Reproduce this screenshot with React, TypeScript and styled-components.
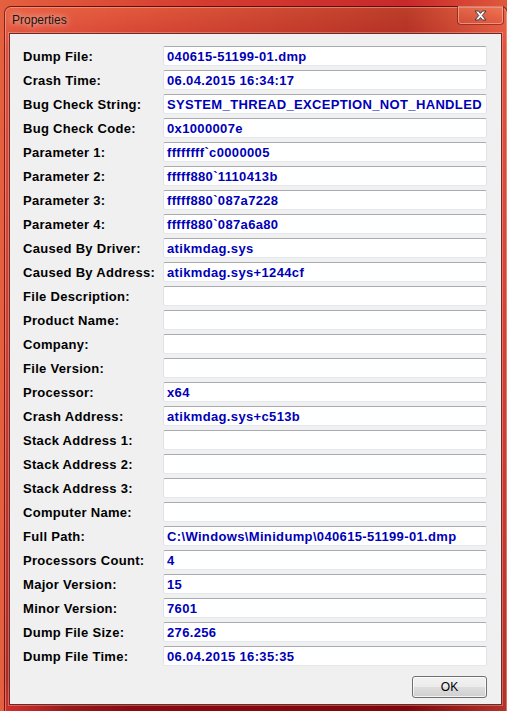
import React from "react";
import styled, { createGlobalStyle } from "styled-components";

const GlobalStyle = createGlobalStyle`
  html, body {
    margin: 0;
    padding: 0;
    overflow: hidden;
  }
  body {
    background: #c92a24;
  }
`;

interface Field {
  label: string;
  value?: string;
}

const fields: Field[] = [
  { label: "Dump File:", value: "040615-51199-01.dmp" },
  { label: "Crash Time:", value: "06.04.2015 16:34:17" },
  { label: "Bug Check String:", value: "SYSTEM_THREAD_EXCEPTION_NOT_HANDLED" },
  { label: "Bug Check Code:", value: "0x1000007e" },
  { label: "Parameter 1:", value: "ffffffff`c0000005" },
  { label: "Parameter 2:", value: "fffff880`1110413b" },
  { label: "Parameter 3:", value: "fffff880`087a7228" },
  { label: "Parameter 4:", value: "fffff880`087a6a80" },
  { label: "Caused By Driver:", value: "atikmdag.sys" },
  { label: "Caused By Address:", value: "atikmdag.sys+1244cf" },
  { label: "File Description:" },
  { label: "Product Name:" },
  { label: "Company:" },
  { label: "File Version:" },
  { label: "Processor:", value: "x64" },
  { label: "Crash Address:", value: "atikmdag.sys+c513b" },
  { label: "Stack Address 1:" },
  { label: "Stack Address 2:" },
  { label: "Stack Address 3:" },
  { label: "Computer Name:" },
  { label: "Full Path:", value: "C:\\Windows\\Minidump\\040615-51199-01.dmp" },
  { label: "Processors Count:", value: "4" },
  { label: "Major Version:", value: "15" },
  { label: "Minor Version:", value: "7601" },
  { label: "Dump File Size:", value: "276.256" },
  { label: "Dump File Time:", value: "06.04.2015 16:35:35" },
];

export default function App() {
  return (
    <>
      <GlobalStyle />
      <Desktop>
        <Window>
          <TitleBar>
            <Caption>Properties</Caption>
            <CloseButton type="button" aria-label="Close">
              <svg width="13" height="11" viewBox="0 0 13 11">
                <path
                  d="M1 1 H4.5 L6.5 3.4 L8.5 1 H12 L8.3 5.5 L12 10 H8.5 L6.5 7.6 L4.5 10 H1 L4.7 5.5 Z"
                  fill="#f6f6f6"
                  stroke="#3c3c44"
                  strokeWidth="1"
                  strokeLinejoin="round"
                />
              </svg>
            </CloseButton>
          </TitleBar>
          <Client>
            <FieldGrid>
              {fields.map((f) => (
                <React.Fragment key={f.label}>
                  <Label>{f.label}</Label>
                  <ValueBox readOnly value={f.value ?? ""} />
                </React.Fragment>
              ))}
            </FieldGrid>
            <Actions>
              <OkButton type="button">OK</OkButton>
            </Actions>
          </Client>
        </Window>
      </Desktop>
    </>
  );
}

const Desktop = styled.div`
  width: 507px;
  height: 711px;
  overflow: hidden;
  background: linear-gradient(90deg, #e4603f 0%, #d43c30 40%, #c8282a 80%, #e0583c 100%);
`;

const Window = styled.div`
  margin: 6px 0 0 4px;
  width: 504px;
  height: 712px;
  box-sizing: border-box;
  display: flex;
  flex-direction: column;
  border: 1px solid rgba(90, 10, 10, 0.7);
  border-radius: 7px 7px 0 0;
  box-shadow: inset 0 0 0 1px rgba(255, 210, 190, 0.4);
  background:
    radial-gradient(ellipse 60px 40px at 0% 100%, rgba(255, 50, 50, 0.55), transparent),
    linear-gradient(90deg, rgba(255, 140, 100, 0.25) 0%, transparent 25%, rgba(100, 0, 0, 0.3) 80%, rgba(255, 130, 90, 0.35) 100%),
    linear-gradient(180deg, #e2593c 0%, #d23b31 6%, #c02222 45%, #a20f18 80%, #880910 100%);
`;

const TitleBar = styled.div`
  height: 26px;
  display: flex;
  align-items: flex-start;
  justify-content: space-between;
  padding: 0 3px 0 7px;
`;

const Caption = styled.span`
  margin-top: 6px;
  font-family: "Liberation Sans", Arial, sans-serif;
  font-size: 12px;
  color: #161616;
  text-shadow: 0 0 6px rgba(255, 225, 215, 0.8), 0 0 10px rgba(255, 225, 215, 0.55);
`;

const CloseButton = styled.button`
  width: 47px;
  height: 19px;
  margin-top: -1px;
  padding: 0;
  display: flex;
  align-items: center;
  justify-content: center;
  border: 1px solid rgba(100, 20, 15, 0.6);
  border-top: none;
  border-radius: 0 0 4px 4px;
  box-shadow: inset 0 0 0 1px rgba(255, 205, 185, 0.5);
  background: linear-gradient(180deg, rgba(255, 150, 120, 0.3), rgba(220, 80, 55, 0.25));
`;

const Client = styled.div`
  margin: 0 5px 0 4px;
  height: 672px;
  box-sizing: border-box;
  display: flex;
  flex-direction: column;
  padding: 12px 14px 6px 13px;
  background: #f0f0f0;
  border: 1px solid #6d2a24;
  box-shadow: 0 0 0 1px rgba(255, 200, 190, 0.35);
`;

const FieldGrid = styled.div`
  display: grid;
  grid-template-columns: 140px 1fr;
  grid-auto-rows: 20px;
  row-gap: 4px;
  align-items: center;
`;

const Label = styled.span`
  font-family: "Liberation Sans", Arial, sans-serif;
  font-weight: bold;
  font-size: 13px;
  letter-spacing: 0.3px;
  color: #000;
  white-space: nowrap;
`;

const ValueBox = styled.input`
  height: 20px;
  width: 100%;
  box-sizing: border-box;
  margin: 0;
  padding: 0 3px;
  font-family: "Liberation Sans", Arial, sans-serif;
  font-weight: bold;
  font-size: 13px;
  letter-spacing: 0.35px;
  color: #0000b8;
  background: #fff;
  border: 1px solid #dfe2e8;
  border-top-color: #a9abb3;
  border-bottom-color: #e3e8ee;
  border-radius: 2px;
  outline: none;
`;

const Actions = styled.div`
  display: flex;
  justify-content: flex-end;
  margin-top: 10px;
`;

const OkButton = styled.button`
  width: 75px;
  height: 22px;
  padding: 0;
  font-family: "Liberation Sans", Arial, sans-serif;
  font-size: 12px;
  color: #000;
  border: 1px solid #707070;
  border-radius: 3px;
  box-shadow: inset 0 0 0 1px rgba(255, 255, 255, 0.75);
  background: linear-gradient(180deg, #f2f2f2 0%, #ebebeb 50%, #dddddd 51%, #cfcfcf 100%);
`;
